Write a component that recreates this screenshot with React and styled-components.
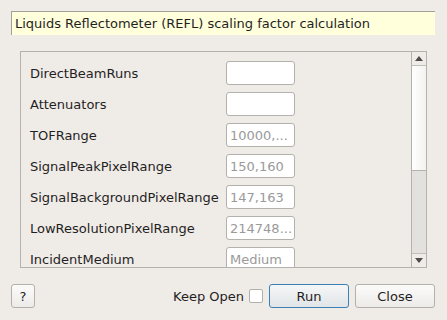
import React from "react";
import styled, { createGlobalStyle } from "styled-components";

const GlobalStyle = createGlobalStyle`
  html, body {
    margin: 0;
    padding: 0;
    background: #efebe7;
  }
  body {
    font-family: "DejaVu Sans", "Liberation Sans", sans-serif;
    font-size: 13px;
    color: #1f1f1f;
  }
`;

const Dialog = styled.div`
  width: 447px;
  height: 320px;
  box-sizing: border-box;
  padding: 11px 12px 12px 11px;
  display: flex;
  flex-direction: column;
  background: #efebe7;
`;

const Summary = styled.div`
  height: 24px;
  box-sizing: border-box;
  background: #ffffdc;
  border-top: 1px solid #a3a09c;
  border-left: 1px solid #a3a09c;
  padding-left: 3px;
  display: flex;
  align-items: center;
  white-space: nowrap;
`;

const ScrollFrame = styled.div`
  margin: 16px 8px 0 9px;
  height: 217px;
  box-sizing: border-box;
  border: 1px solid #b5b1ac;
  display: flex;
  overflow: hidden;
`;

const Rows = styled.div`
  flex: 1;
  padding: 9px 0 0 9px;
  display: grid;
  grid-template-columns: 196px 69px;
  grid-auto-rows: 24px;
  row-gap: 7px;
  align-items: center;
  align-content: start;
`;

const Label = styled.div`
  white-space: nowrap;
`;

const Field = styled.div`
  height: 24px;
  box-sizing: border-box;
  border: 1px solid #b4b0ab;
  border-radius: 3px;
  background: #ffffff;
  padding: 0 3px;
  display: flex;
  align-items: center;
  color: #9a9a9a;
  white-space: nowrap;
  overflow: hidden;
`;

const ScrollBar = styled.div`
  width: 14px;
  border-left: 1px solid #b5b1ac;
  display: flex;
  flex-direction: column;
  background: #e3e1de;
`;

const ArrowButton = styled.div`
  height: 13px;
  background: #efebe7;
  border-${(p) => (p.$down ? "top" : "bottom")}: 1px solid #c2beb9;
  display: flex;
  align-items: center;
  justify-content: center;
`;

const Thumb = styled.div`
  height: 105px;
  box-sizing: border-box;
  background: linear-gradient(to right, #ffffff, #f3f2f0);
  border-bottom: 1px solid #b5b1ac;
`;

const Track = styled.div`
  flex: 1;
`;

const Footer = styled.div`
  margin-top: 16px;
  display: flex;
  align-items: center;
`;

const Button = styled.button`
  font: inherit;
  color: #1f1f1f;
  height: 24px;
  width: ${(p) => p.$width}px;
  box-sizing: border-box;
  border-radius: 3px;
  border: 1px solid ${(p) => (p.$primary ? "#3b7fb3" : "#b4b0ab")};
  background: ${(p) =>
    p.$primary
      ? "linear-gradient(#f5f6f7, #e1e5e8)"
      : "linear-gradient(#fbfbfa, #edebe8)"};
  padding: 0;
  margin-left: ${(p) => p.$gap || 0}px;
`;

const Spacer = styled.div`
  flex: 1;
`;

const CheckLabel = styled.span`
  margin-right: 5px;
`;

const CheckBox = styled.div`
  width: 14px;
  height: 14px;
  box-sizing: border-box;
  border: 1px solid #b4b0ab;
  border-radius: 2px;
  background: #ffffff;
`;

const Arrow = ({ down }) => (
  <svg width="8" height="5" viewBox="0 0 8 5">
    <path d={down ? "M0 0 H8 L4 5 Z" : "M0 5 H8 L4 0 Z"} fill="#4e4c4a" />
  </svg>
);

const fields = [
  ["DirectBeamRuns", ""],
  ["Attenuators", ""],
  ["TOFRange", "10000,..."],
  ["SignalPeakPixelRange", "150,160"],
  ["SignalBackgroundPixelRange", "147,163"],
  ["LowResolutionPixelRange", "214748..."],
  ["IncidentMedium", "Medium"],
];

export default function App() {
  return (
    <Dialog>
      <GlobalStyle />
      <Summary>Liquids Reflectometer (REFL) scaling factor calculation</Summary>
      <ScrollFrame>
        <Rows>
          {fields.map(([name, hint]) => (
            <React.Fragment key={name}>
              <Label>{name}</Label>
              <Field>{hint}</Field>
            </React.Fragment>
          ))}
        </Rows>
        <ScrollBar>
          <ArrowButton>
            <Arrow />
          </ArrowButton>
          <Thumb />
          <Track />
          <ArrowButton $down>
            <Arrow down />
          </ArrowButton>
        </ScrollBar>
      </ScrollFrame>
      <Footer>
        <Button $width={24}>?</Button>
        <Spacer />
        <CheckLabel>Keep Open</CheckLabel>
        <CheckBox />
        <Button $width={80} $primary $gap={6}>
          Run
        </Button>
        <Button $width={80} $gap={6}>
          Close
        </Button>
      </Footer>
    </Dialog>
  );
}
